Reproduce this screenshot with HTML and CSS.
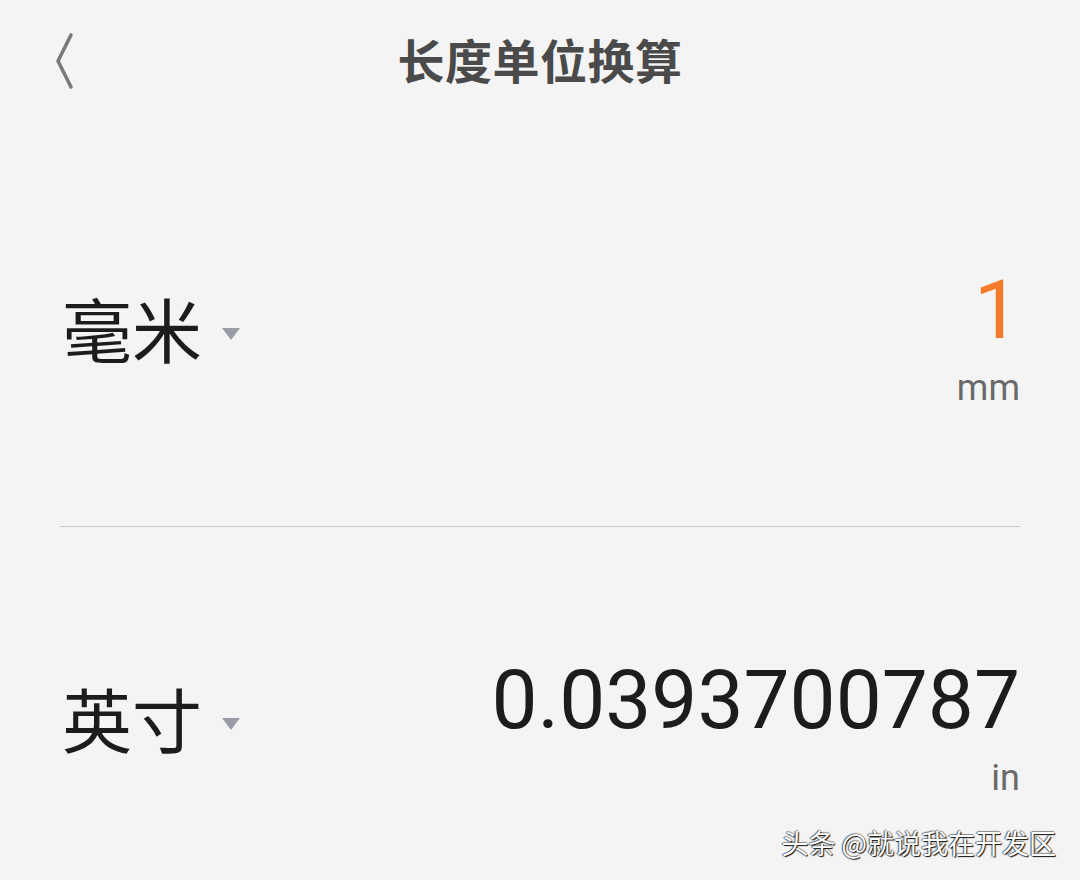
FILE: index.html
```html
<!DOCTYPE html>
<html lang="zh-CN">
<head>
  <meta charset="UTF-8" />
  <meta name="viewport" content="width=device-width, initial-scale=1.0"/>
  <title>长度单位换算</title>
  <link rel="stylesheet" href="styles.css">
</head>
<body>

  <!-- Top bar -->
  <header class="topbar">
    <svg class="back" width="30" height="60" viewBox="0 0 30 60">
      <path d="M16 3 L3 29 L16 55" fill="none" stroke="#7a7a7a" stroke-width="3.6" stroke-linecap="round" stroke-linejoin="round"/>
    </svg>
    <h1 class="title">长度单位换算</h1>
  </header>

  <!-- Source unit -->
  <section class="row row-first">
    <div class="unit-pick">
      <span class="unit-name">毫米</span>
      <span class="caret"></span>
    </div>
    <div class="value">
      <div class="number active">1</div>
      <div class="symbol">mm</div>
    </div>
  </section>

  <div class="divider"></div>

  <!-- Target unit -->
  <section class="row row-second">
    <div class="unit-pick">
      <span class="unit-name">英寸</span>
      <span class="caret"></span>
    </div>
    <div class="value">
      <div class="number">0.0393700787</div>
      <div class="symbol symbol-in">in</div>
    </div>
  </section>

  <div class="watermark">头条 @就说我在开发区</div>

</body>
</html>
```

FILE: styles.css
```css
/* Global */
body {
  margin: 0;
  padding: 0;
  height: 880px;
  background: #f4f4f4;
  font-family: "Noto Sans CJK SC", "Noto Sans", sans-serif;
  position: relative;
  overflow: hidden;
}
/* Top bar */
.topbar {
  position: relative;
  height: 124px;
  display: flex;
  justify-content: center;
  align-items: center;
}
.back {
  position: absolute;
  left: 55px;
  top: 32px;
}
.title {
  margin: 0 0 8px;
  font-size: 47px;
  font-weight: 700;
  line-height: 1;
  color: #4a4a4a;
  letter-spacing: 0.5px;
}
/* Rows */
.row {
  display: flex;
  justify-content: space-between;
  align-items: flex-start;
  padding: 0 60px;
}
.row-first {
  padding-top: 145px;
  padding-bottom: 120px;
}
.row-second {
  padding-top: 132px;
}
.unit-pick {
  display: flex;
  align-items: center;
  margin-top: 24px;
  padding-left: 2px;
}
.unit-name {
  font-size: 70px;
  line-height: 70px;
  color: #1c1c1c;
}
/* Dropdown caret */
.caret {
  width: 0;
  height: 0;
  margin-left: 20px;
  margin-top: 12px;
  border-left: 9px solid transparent;
  border-right: 9px solid transparent;
  border-top: 12px solid #9a9ca6;
}
/* Values */
.value {
  display: flex;
  flex-direction: column;
  align-items: flex-end;
  font-family: Roboto, "Noto Sans", sans-serif;
}
.number {
  font-size: 82px;
  line-height: 82px;
  color: #1c1c1c;
}
.number.active {
  color: #f57a2a;
}
.symbol {
  margin-top: 19px;
  font-size: 36px;
  line-height: 36px;
  color: #6a6a6a;
}
.symbol-in {
  margin-top: 19px;
}
.divider {
  height: 1px;
  margin: 0 60px;
  background: #c9c9c9;
}
/* Watermark */
.watermark {
  position: absolute;
  right: 24px;
  bottom: 24px;
  font-size: 27px;
  line-height: 1;
  color: #ffffff;
  text-shadow: 1px 1px 1px #111, -1px 0 1px rgba(0,0,0,0.6), 0 -1px 1px rgba(0,0,0,0.4);
}
```
